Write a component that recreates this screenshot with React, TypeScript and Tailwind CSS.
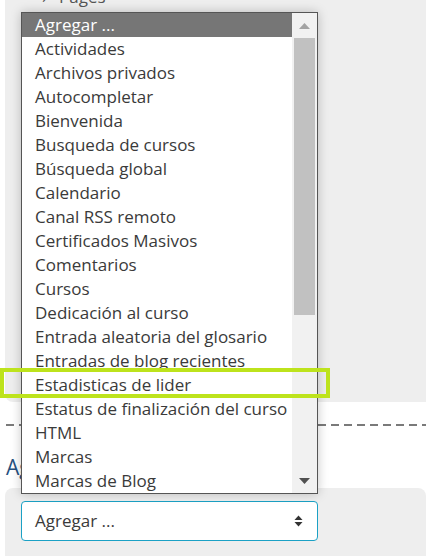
import React from 'react';

const options = [
  'Agregar ...',
  'Actividades',
  'Archivos privados',
  'Autocompletar',
  'Bienvenida',
  'Busqueda de cursos',
  'Búsqueda global',
  'Calendario',
  'Canal RSS remoto',
  'Certificados Masivos',
  'Comentarios',
  'Cursos',
  'Dedicación al curso',
  'Entrada aleatoria del glosario',
  'Entradas de blog recientes',
  'Estadisticas de lider',
  'Estatus de finalización del curso',
  'HTML',
  'Marcas',
  'Marcas de Blog',
];

export default function App() {
  return (
    <div className="relative w-[426px] h-[556px] overflow-hidden bg-white font-['Open_Sans',sans-serif] text-[17px]">
      {/* Upper panel (page list) */}
      <div className="ml-[5px] h-[402px] rounded-bl-lg bg-[#eeeeee]">
        <div className="relative -top-[14px] pl-[37px] text-[#555] leading-[22px]">
          <span className="mr-[12px]">›</span>Pages
        </div>
      </div>

      {/* dashed separator */}
      <div className="mt-[22px] ml-[6px] h-[2px] bg-[repeating-linear-gradient(to_right,#7a7a7a_0_8px,transparent_8px_13px)]" />

      {/* Add block heading */}
      <h3 className="mt-[29px] ml-[6px] text-[21px] leading-[24px] text-[#26507f]">Agregar un bloque</h3>

      {/* Lower panel with the select */}
      <div className="mt-[9px] ml-[5px] h-[80px] rounded-lg bg-[#eeeeee] pt-[13px] pl-[16px]">
        <div className="flex items-center justify-between w-[297px] h-[40px] rounded-[4px] border border-[#1ba1c5] bg-white pl-[13px] pr-[14px] text-[#3a3a3a]">
          <span>Agregar ...</span>
          <svg width="9" height="12" viewBox="0 0 9 12">
            <path d="M4.5 0.5L8.5 5H0.5z" fill="#333" />
            <path d="M4.5 11.5L8.5 7H0.5z" fill="#333" />
          </svg>
        </div>
      </div>

      {/* Open listbox */}
      <div className="absolute left-[21px] top-[12px] flex w-[297px] h-[482px] border border-[#555] bg-white shadow-[0_0_10px_rgba(0,0,0,0.22)]">
        <ul className="flex-1 overflow-hidden">
          {options.map((o, i) => (
            <li
              key={o}
              className={`h-[24px] pl-[13px] leading-[24px] whitespace-nowrap ${i === 0 ? 'bg-[#767676] text-white' : 'text-[#3a3a3a]'}`}
            >
              {o}
            </li>
          ))}
        </ul>
        <div className="flex w-[25px] flex-col bg-[#f1f1f1]">
          <div className="flex h-[25px] items-center justify-center">
            <svg width="11" height="6" viewBox="0 0 11 6">
              <path d="M5.5 0L11 6H0z" fill="#a3a3a3" />
            </svg>
          </div>
          <div className="mx-[2px] h-[277px] bg-[#c1c1c1]" />
          <div className="flex-1" />
          <div className="flex h-[25px] items-center justify-center">
            <svg width="11" height="6" viewBox="0 0 11 6">
              <path d="M0 0H11L5.5 6z" fill="#505050" />
            </svg>
          </div>
        </div>
      </div>

      {/* Highlight box */}
      <div className="absolute left-0 top-[368px] w-[330px] h-[30px] border-4 border-[#bde31c]" />
    </div>
  );
}
